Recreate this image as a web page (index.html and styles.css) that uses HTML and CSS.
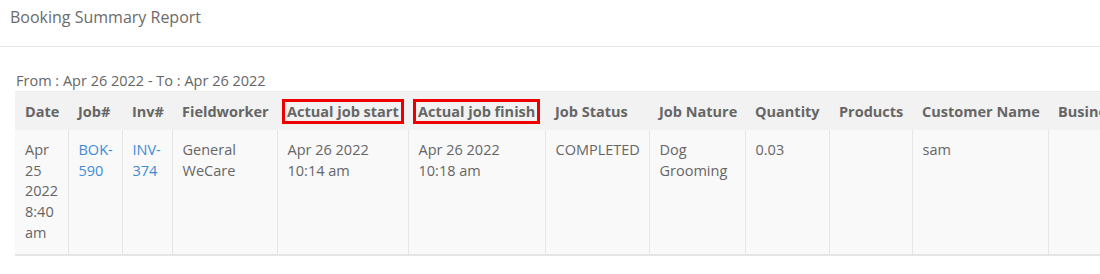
FILE: index.html
```html
<!DOCTYPE html>
<html lang="en">
<head>
<meta charset="utf-8">
<title>Booking Summary Report</title>
<link rel="stylesheet" href="styles.css">
</head>
<body>
<div class="panel">
  <div class="panel-heading">Booking Summary Report</div>
  <div class="panel-body">
    <div class="range">From : Apr 26 2022 - To : Apr 26 2022</div>
    <table class="report">
      <colgroup>
        <col class="c-date">
        <col class="c-job">
        <col class="c-inv">
        <col class="c-worker">
        <col class="c-start">
        <col class="c-finish">
        <col class="c-status">
        <col class="c-nature">
        <col class="c-qty">
        <col class="c-products">
        <col class="c-customer">
        <col class="c-business">
        <col class="c-address">
      </colgroup>
      <thead>
        <tr>
          <th>Date</th>
          <th>Job#</th>
          <th>Inv#</th>
          <th>Fieldworker</th>
          <th><span class="mark">Actual job start</span></th>
          <th><span class="mark">Actual job finish</span></th>
          <th>Job Status</th>
          <th>Job Nature</th>
          <th>Quantity</th>
          <th>Products</th>
          <th>Customer Name</th>
          <th>Business Name</th>
          <th>Address</th>
        </tr>
      </thead>
      <tbody>
        <tr>
          <td>Apr 25 2022 8:40 am</td>
          <td><a class="link" href="#">BOK-590</a></td>
          <td><a class="link" href="#">INV-374</a></td>
          <td>General WeCare</td>
          <td>Apr 26 2022<br>10:14 am</td>
          <td>Apr 26 2022<br>10:18 am</td>
          <td>COMPLETED</td>
          <td>Dog Grooming</td>
          <td>0.03</td>
          <td></td>
          <td>sam</td>
          <td></td>
          <td></td>
        </tr>
      </tbody>
    </table>
  </div>
</div>
</body>
</html>
```

FILE: styles.css
```css
html, body {
  margin: 0;
  padding: 0;
  background: #ffffff;
}

body {
  font-family: "Open Sans", "Liberation Sans", sans-serif;
  color: #666666;
  font-size: 14.5px;
  overflow: hidden;
  width: 1100px;
}

.panel {
  overflow: hidden;
}

.panel-heading {
  font-size: 16px;
  line-height: 22px;
  padding: 6px 10px 0;
  height: 40px;
  border-bottom: 1px solid #e8e8e8;
  color: #6b6b6b;
}

.panel-body {
  padding: 24px 15px 0;
}

.range {
  line-height: 20px;
  padding-left: 1px;
}

.report {
  border-collapse: collapse;
  table-layout: fixed;
  width: 1300px;
  line-height: 20.75px;
  border-top: 1px solid #ececec;
  border-bottom: 2px solid #e5e5e5;
}

.c-date { width: 53px; }
.c-job { width: 54px; }
.c-inv { width: 50px; }
.c-worker { width: 105px; }
.c-start { width: 131px; }
.c-finish { width: 137px; }
.c-status { width: 104px; }
.c-nature { width: 96px; }
.c-qty { width: 84px; }
.c-products { width: 83px; }
.c-customer { width: 136px; }
.c-business { width: 130px; }
.c-address { width: 137px; }

.report th {
  background: #f2f2f2;
  font-weight: 700;
  text-align: left;
  white-space: nowrap;
  padding: 10px 10px 7px;
  color: #666666;
  overflow: visible;
}

.report td {
  background: #f9f9f9;
  vertical-align: top;
  padding: 10px 10px;
  border-left: 1px solid #e6e6e6;
}

.report td:first-child {
  border-left: none;
}

.mark {
  display: inline-block;
  line-height: 19px;
  border: 3px solid #ee0000;
  padding: 0 2px;
  margin: -3px -5px;
}

.link {
  color: #3d8bd6;
  text-decoration: none;
}
```
